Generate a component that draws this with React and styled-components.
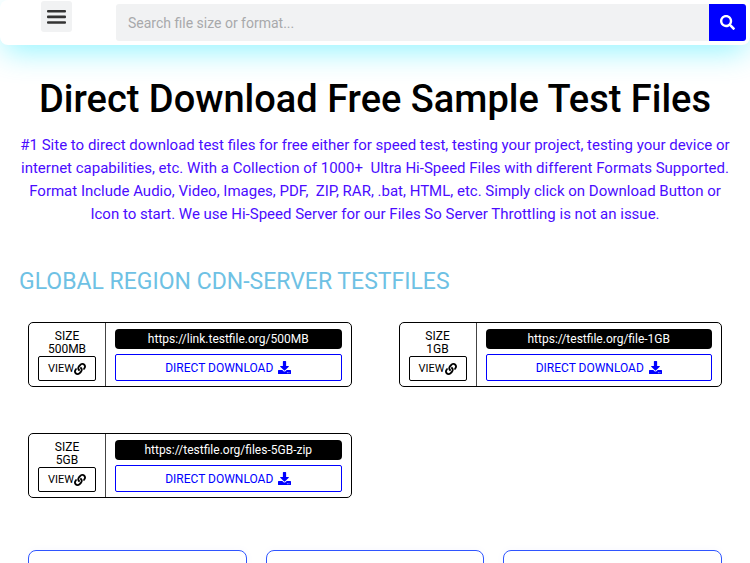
import React from 'react';
import styled, { createGlobalStyle } from 'styled-components';
import { FaSearch, FaLink, FaDownload } from 'react-icons/fa';

const GlobalStyle = createGlobalStyle`
    * {
        box-sizing: border-box;
    }

    html {
        scrollbar-width: none;
    }

    body {
        margin: 0;
        background: #fff;
        font-family: Roboto, "Liberation Sans", sans-serif;
    }
`;

const Header = styled.header`
    display: flex;
    align-items: flex-start;
    gap: 4px;
    height: 45px;
    padding: 0 4px 0 0;
    background: #fff;
    border-radius: 8px;
    box-shadow: 0 10px 30px -4px #00e5ff70;
`;

const MenuArea = styled.div`
    flex: 0 0 112px;
    display: flex;
    justify-content: center;
    padding-top: 1px;
`;

const MenuButton = styled.button`
    display: flex;
    align-items: center;
    justify-content: center;
    width: 31px;
    height: 31px;
    padding: 0;
    border: 0;
    border-radius: 3px;
    background: #f1f2f3;
`;

const SearchForm = styled.form`
    flex: 1;
    display: flex;
    height: 37px;
    margin-top: 4px;
    border-radius: 3px;
    overflow: hidden;
`;

const SearchInput = styled.input`
    flex: 1;
    min-width: 0;
    padding: 0 12px;
    border: 0;
    outline: 0;
    background: #f1f2f3;
    font-family: inherit;
    font-size: 14px;

    &::placeholder {
        color: #a8a9ab;
        opacity: 1;
    }
`;

const SearchButton = styled.button`
    display: flex;
    align-items: center;
    justify-content: center;
    width: 37px;
    padding: 0;
    border: 0;
    background: #0000ff;
    color: #fff;
    font-size: 15px;
`;

const Intro = styled.section`
    padding: 30px 20px 0;
    text-align: center;
`;

const Title = styled.h1`
    margin: 0;
    color: #000;
    font-size: 38px;
    font-weight: 500;
    line-height: 48px;
    white-space: nowrap;
`;

const Description = styled.p`
    margin: 11px 0 0;
    color: #4a0cff;
    font-size: 15px;
    line-height: 23px;
    white-space: pre-wrap;
`;

const RegionTitle = styled.h2`
    margin: 42px 0 0 19px;
    color: #6ec1e4;
    font-size: 23px;
    font-weight: 400;
    line-height: 28px;
`;

const FileGrid = styled.section`
    display: grid;
    grid-template-columns: 1fr 1fr;
    gap: 46px 47px;
    padding: 26px 28px 0;
`;

const FileCard = styled.article`
    display: flex;
    height: 65px;
    border: 1px solid #000;
    border-radius: 5px;
`;

const SizeColumn = styled.div`
    flex: 0 0 77px;
    display: flex;
    flex-direction: column;
    padding: 7px 9px 5px;
    border-right: 1px solid #444;
    color: #000;
    font-size: 12px;
    line-height: 13px;
    text-align: center;
`;

const ViewLink = styled.a`
    display: flex;
    align-items: center;
    justify-content: center;
    height: 26px;
    border: 1px solid #000;
    border-radius: 2px;
    color: #000;
    font-size: 11px;
    text-decoration: none;
`;

const LinkColumn = styled.div`
    flex: 1;
    display: flex;
    flex-direction: column;
    gap: 5px;
    padding: 6px 9px 5px;
`;

const Address = styled.div`
    height: 20px;
    border-radius: 4px;
    background: #000;
    color: #fff;
    font-size: 12px;
    line-height: 21px;
    text-align: center;
`;

const DownloadLink = styled.a`
    display: flex;
    align-items: center;
    justify-content: center;
    gap: 5px;
    height: 27px;
    border: 1px solid #0000ff;
    border-radius: 2px;
    color: #0000ff;
    font-size: 12px;
    text-decoration: none;
`;

const CategoryGrid = styled.section`
    display: grid;
    grid-template-columns: repeat(3, 1fr);
    gap: 19px;
    padding: 52px 28px 40px;
`;

const CategoryCard = styled.div`
    min-height: 180px;
    border: 1px solid #2f55ff;
    border-radius: 8px;
    box-shadow: 0 0 10px #0040ff08;
`;

const files = [
    { size: '500MB', address: 'https://link.testfile.org/500MB' },
    { size: '1GB', address: 'https://testfile.org/file-1GB' },
    { size: '5GB', address: 'https://testfile.org/files-5GB-zip' },
];

function MenuIcon() {
    return (
        <svg width="19" height="14" viewBox="0 0 19 14" fill="#333" aria-hidden="true">
            <rect width="19" height="2.6" rx="1" />
            <rect y="5.6" width="19" height="2.6" rx="1" />
            <rect y="11.2" width="19" height="2.6" rx="1" />
        </svg>
    );
}

function App() {
    return (
        <>
            <GlobalStyle />
            <Header>
                <MenuArea>
                    <MenuButton type="button" aria-label="Menu">
                        <MenuIcon />
                    </MenuButton>
                </MenuArea>
                <SearchForm role="search">
                    <SearchInput
                        type="search"
                        aria-label="Search"
                        placeholder="Search file size or format..."
                    />
                    <SearchButton type="submit" aria-label="Search">
                        <FaSearch />
                    </SearchButton>
                </SearchForm>
            </Header>
            <main>
                <Intro>
                    <Title>Direct Download Free Sample Test Files</Title>
                    <Description>
                        #1 Site to direct download test files for free either for speed test, testing your project, testing your device or
                        <br />
                        {'internet capabilities, etc. With a Collection of 1000+  Ultra Hi-Speed Files with different Formats Supported.'}
                        <br />
                        {'Format Include Audio, Video, Images, PDF,  ZIP, RAR, .bat, HTML, etc. Simply click on Download Button or'}
                        <br />
                        Icon to start. We use Hi-Speed Server for our Files So Server Throttling is not an issue.
                    </Description>
                </Intro>
                <RegionTitle>GLOBAL REGION CDN-SERVER TESTFILES</RegionTitle>
                <FileGrid>
                    {files.map((file) => (
                        <FileCard key={file.size}>
                            <SizeColumn>
                                <span>SIZE</span>
                                <span>{file.size}</span>
                                <ViewLink href="#view">
                                    VIEW
                                    <FaLink size={12} />
                                </ViewLink>
                            </SizeColumn>
                            <LinkColumn>
                                <Address>{file.address}</Address>
                                <DownloadLink href="#download">
                                    DIRECT DOWNLOAD
                                    <FaDownload size={13} />
                                </DownloadLink>
                            </LinkColumn>
                        </FileCard>
                    ))}
                </FileGrid>
                <CategoryGrid>
                    <CategoryCard />
                    <CategoryCard />
                    <CategoryCard />
                </CategoryGrid>
            </main>
        </>
    );
}

export default App;
